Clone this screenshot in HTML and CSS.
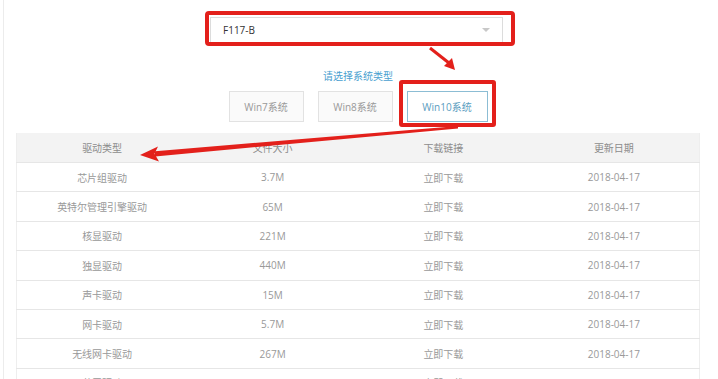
FILE: index.html
```
<!DOCTYPE html>
<html lang="zh-CN">
<head>
    <meta charset="UTF-8">
    <meta name="viewport" content="width=device-width, initial-scale=1.0">
    <title>驱动下载</title>
    <link rel="stylesheet" href="styles.css">
</head>
<body>
    <div class="page">
        <div class="model-row">
            <div class="model-select marked">
                <span class="model-name">F117-B</span>
                <span class="caret"></span>
            </div>
        </div>
        <p class="os-tip">请选择系统类型</p>
        <div class="os-tabs">
            <button type="button" class="os-tab">Win7系统</button>
            <button type="button" class="os-tab">Win8系统</button>
            <button type="button" class="os-tab active marked">Win10系统</button>
        </div>
        <table class="driver-table">
            <thead>
                <tr>
                    <th>驱动类型</th>
                    <th>文件大小</th>
                    <th>下载链接</th>
                    <th>更新日期</th>
                </tr>
            </thead>
            <tbody>
                <tr><td>芯片组驱动</td><td>3.7M</td><td><a href="#">立即下载</a></td><td>2018-04-17</td></tr>
                <tr><td>英特尔管理引擎驱动</td><td>65M</td><td><a href="#">立即下载</a></td><td>2018-04-17</td></tr>
                <tr><td>核显驱动</td><td>221M</td><td><a href="#">立即下载</a></td><td>2018-04-17</td></tr>
                <tr><td>独显驱动</td><td>440M</td><td><a href="#">立即下载</a></td><td>2018-04-17</td></tr>
                <tr><td>声卡驱动</td><td>15M</td><td><a href="#">立即下载</a></td><td>2018-04-17</td></tr>
                <tr><td>网卡驱动</td><td>5.7M</td><td><a href="#">立即下载</a></td><td>2018-04-17</td></tr>
                <tr><td>无线网卡驱动</td><td>267M</td><td><a href="#">立即下载</a></td><td>2018-04-17</td></tr>
                <tr><td>蓝牙驱动</td><td>3.2M</td><td><a href="#">立即下载</a></td><td>2018-04-17</td></tr>
            </tbody>
        </table>
    </div>

    <!-- red annotation arrows drawn over the page -->
    <svg class="arrows" width="718" height="379" viewBox="0 0 718 379">
        <line x1="430" y1="48" x2="449" y2="63" stroke="#e3201b" stroke-width="3"/>
        <polygon points="455,70 444,66 452,58" fill="#e3201b"/>
        <polygon points="458,126 458,128.4 155,156.4 155,151.2" fill="#e3201b"/>
        <polygon points="140,155 158,146.5 154.5,153.8 159,161.5" fill="#e3201b"/>
    </svg>
</body>
</html>
```

FILE: styles.css
```
body {
    margin: 0;
    position: relative;
    background: #fff;
    font-family: "Open Sans", "Noto Sans CJK SC", sans-serif;
    font-size: 10px;
    color: #999;
    overflow: hidden;
}
.page {
    height: 379px;
    margin-left: 3px;
    border-left: 1px solid #ececec;
    padding-top: 17px;
    box-sizing: border-box;
    overflow: hidden;
}
.model-row {
    display: flex;
    justify-content: center;
    padding-right: 9px;
}
.model-select {
    width: 293px;
    height: 26px;
    box-sizing: border-box;
    border: 1px solid #dcdcdc;
    display: flex;
    align-items: center;
    padding: 0 12px;
    color: #333;
    background: #fff;
}
.model-select.marked {
    position: relative;
}
.model-select.marked::after {
    content: "";
    position: absolute;
    top: -7px;
    bottom: -4px;
    left: -6px;
    right: -13px;
    border: 4px solid #e3201b;
    border-radius: 4px;
}
.caret {
    margin-left: auto;
    width: 0;
    height: 0;
    border-left: 4px solid transparent;
    border-right: 4px solid transparent;
    border-top: 4px solid #c8c8c8;
}
.os-tip {
    margin: 26px 0 0;
    line-height: 14px;
    text-align: center;
    padding-right: 6px;
    color: #4a9fd0;
}
.os-tabs {
    display: flex;
    justify-content: center;
    gap: 14px;
    margin-top: 8px;
    padding-right: 6px;
}
.os-tab {
    width: 75px;
    height: 31px;
    border: 1px solid #e2e2e2;
    background: #fafafa;
    color: #999;
    font-family: inherit;
    font-size: 10px;
    padding: 0;
}
.os-tab.active {
    width: 81px;
    border-color: #8cbdd4;
    background: #fff;
    color: #5a9dc0;
    position: relative;
}
.os-tab.marked::after {
    content: "";
    position: absolute;
    top: -12px;
    bottom: -6px;
    left: -9px;
    right: -9px;
    border: 4px solid #e3201b;
    border-radius: 3px;
}
.driver-table {
    width: 684px;
    margin: 11px 0 0 12px;
    border-collapse: collapse;
    table-layout: fixed;
    border-left: 1px solid #eee;
    border-right: 1px solid #eee;
}
.driver-table th {
    height: 29px;
    padding: 0;
    background: #f3f3f3;
    font-weight: normal;
    color: #8c8c8c;
}
.driver-table td {
    height: 28.4px;
    padding: 0;
    text-align: center;
    border-top: 1px solid #e6e6e6;
}
.driver-table a {
    color: #999;
    text-decoration: none;
}
.arrows {
    position: absolute;
    top: 0;
    left: 0;
    pointer-events: none;
}
```
